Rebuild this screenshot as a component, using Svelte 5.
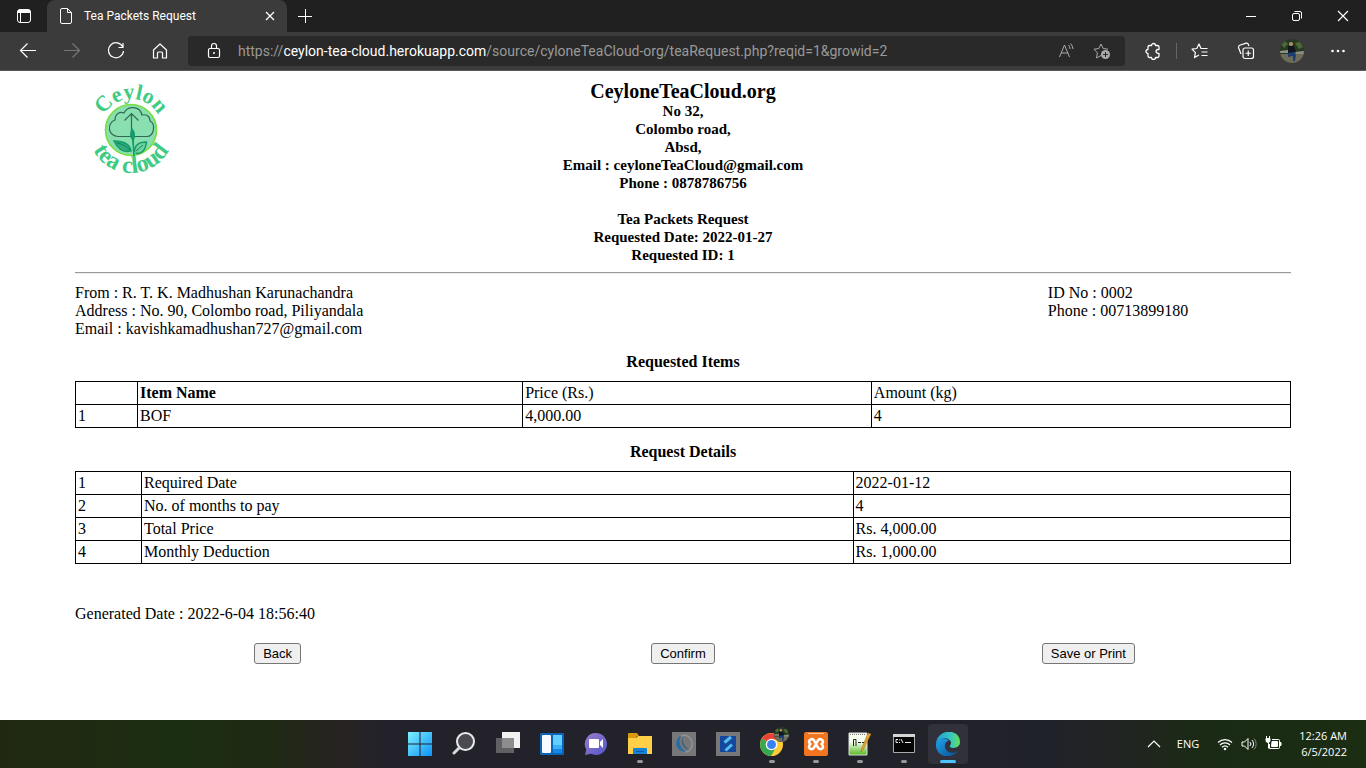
<script>
  const letterhead = ['No 32,', 'Colombo road,', 'Absd,', 'Email : ceyloneTeaCloud@gmail.com', 'Phone : 0878786756'];
  const summary = ['Tea Packets Request', 'Requested Date: 2022-01-27', 'Requested ID: 1'];
  const sender = ['From : R. T. K. Madhushan Karunachandra', 'Address : No. 90, Colombo road, Piliyandala', 'Email : kavishkamadhushan727@gmail.com'];
  const items = [['1', 'BOF', '4,000.00', '4']];
  const details = [
    ['1', 'Required Date', '2022-01-12'],
    ['2', 'No. of months to pay', '4'],
    ['3', 'Total Price', 'Rs. 4,000.00'],
    ['4', 'Monthly Deduction', 'Rs. 1,000.00']
  ];
</script>

<svelte:head><title>Tea Packets Request</title></svelte:head>

{#snippet portrait(cls)}
  <svg class={cls} viewBox="0 0 24 24" aria-hidden="true">
    <clipPath id="disc-{cls}"><circle cx="12" cy="12" r="12" /></clipPath>
    <g clip-path="url(#disc-{cls})">
      <path fill="#263a20" d="M0 0h24v24H0z" />
      <path fill="#4c6a38" d="M1 5l4-3 3 3-4 4zM15 4l5-1 3 5-4 2z" />
      <path fill="#8c8f83" d="M0 12l8-1 2 3H0zM14 13l10-1v4l-9 1z" />
      <path fill="#6e6c58" d="M0 15h24v9H0z" />
      <path fill="#11161f" d="M8 7h6l2 6-3 2H8z" />
      <circle cx="11" cy="5" r="2" fill="#b98c6e" />
      <path fill="#1d3e74" d="M8 14l7-1 1 3-1 6h-2v-5l-5 1z" />
    </g>
  </svg>
{/snippet}

<div class="screen">
  <header class="browser">
    <div class="tabs">
      <button class="tab-actions" aria-label="Tab actions">
        <svg width="16" height="16" viewBox="0 0 16 16"><rect x="1.5" y="1.5" width="13" height="13" rx="2.5" fill="none" stroke="#fff" /><path d="M1.500 5V3.500a2 2 0 0 1 2-2h9a2 2 0 0 1 2 2V5z" fill="#fff" /><path d="M4.500 5v9" stroke="#fff" /></svg>
      </button>
      <div class="tab">
        <svg width="16" height="18" viewBox="0 0 16 18" fill="none" stroke="#fff"><path d="M4 1.500h5.500l4 4V15a1.500 1.500 0 0 1-1.500 1.500H4A1.500 1.500 0 0 1 2.500 15V3A1.500 1.500 0 0 1 4 1.500zM9.500 1.500v4h4" /></svg>
        <span>Tea Packets Request</span>
        <button aria-label="Close tab"><svg width="10" height="10" viewBox="0 0 10 10" stroke="#fff" stroke-width="1.300"><path d="M1 1l8 8M9 1L1 9" /></svg></button>
      </div>
      <button class="new-tab" aria-label="New tab"><svg width="16" height="16" viewBox="0 0 16 16" stroke="#fff"><path d="M8.500 1v14M1 8.500h14" /></svg></button>
      <div class="window-buttons">
        <button aria-label="Minimize"><svg width="12" height="12" viewBox="0 0 12 12" stroke="#fff"><path d="M1 6.500h10" /></svg></button>
        <button aria-label="Restore"><svg width="12" height="12" viewBox="0 0 12 12" fill="none" stroke="#fff"><rect x="1.500" y="3.500" width="7" height="7" rx="1.500" /><path d="M3.500 1.500H9a1.500 1.500 0 0 1 1.500 1.500v5.500" /></svg></button>
        <button aria-label="Close"><svg width="12" height="12" viewBox="0 0 12 12" stroke="#fff" stroke-width="1.200"><path d="M1 1l10 10M11 1L1 11" /></svg></button>
      </div>
    </div>

    <div class="toolbar">
      <nav class="nav">
        <button aria-label="Back"><svg width="18" height="18" viewBox="0 0 18 18" fill="none" stroke="#fff" stroke-width="1.200"><path d="M17 8.500H1.500M8.500 1.500l-7 7 7 7" /></svg></button>
        <button aria-label="Forward" disabled><svg width="18" height="18" viewBox="0 0 18 18" fill="none" stroke="#777" stroke-width="1.200"><path d="M1 8.500h15.500M9.500 1.500l7 7-7 7" /></svg></button>
        <button aria-label="Refresh"><svg width="18" height="18" viewBox="0 0 18 18" fill="none" stroke="#fff" stroke-width="1.200"><path d="M15.800 5A7.500 7.500 0 1 0 16.500 9M16 1v4.500h-4.500" /></svg></button>
        <button aria-label="Home"><svg width="18" height="18" viewBox="0 0 18 18" fill="none" stroke="#fff" stroke-width="1.200"><path d="M2.500 8L9 2l6.500 6v8h-4v-5a1 1 0 0 0-1-1h-3a1 1 0 0 0-1 1v5h-4z" stroke-linejoin="round" /></svg></button>
      </nav>
      <div class="address">
        <svg width="14" height="18" viewBox="0 0 14 18" fill="none" stroke="#fff" stroke-width="1.200"><rect x="1.500" y="6.500" width="11" height="9" rx="1.500" /><path d="M4.500 6V4a2.500 2.500 0 0 1 5 0v2" /><circle cx="7" cy="11" r="1" fill="#fff" stroke="none" /></svg>
        <p class="url">https://<b>ceylon-tea-cloud.herokuapp.com</b>/source/cyloneTeaCloud-org/teaRequest.php?reqid=1&amp;growid=2</p>
        <button aria-label="Read aloud"><svg width="18" height="18" viewBox="0 0 18 18" fill="none" stroke="#aaa"><path d="M1.500 15L6.500 3l5 12M3 11h7M10.500 3a6 6 0 0 1 1.500 4M12.500 1.500A9 9 0 0 1 15 7" /></svg></button>
        <button aria-label="Add to favorites"><svg width="18" height="18" viewBox="0 0 18 18" fill="none" stroke="#aaa"><path d="M8 13.500l-4.500 2.400.9-5L1 7.200l4.800-.7L8 2l2.200 4.500 4.800.7" stroke-linejoin="round" /><circle cx="12.500" cy="12.500" r="4.500" fill="#aaa" stroke="none" /><path d="M12.500 10v5M10 12.500h5" stroke="#292929" /></svg></button>
      </div>
      <div class="tools">
        <button aria-label="Extensions"><svg width="18" height="18" viewBox="0 0 18 18" fill="none" stroke="#fff" stroke-width="1.300"><path d="M5.500 3.500h2a2 2 0 0 1 4 0h2a1.500 1.500 0 0 1 1.500 1.500v2.500h-1a1.800 1.800 0 0 0 0 3.800h1V14a1.500 1.500 0 0 1-1.500 1.500h-2a2 2 0 0 1-4 0h-2A1.500 1.500 0 0 1 4 14v-2.500a2 2 0 0 1 0-4V5a1.500 1.500 0 0 1 1.500-1.500z" stroke-linejoin="round" /></svg></button>
        <i></i>
        <button aria-label="Favorites"><svg width="18" height="18" viewBox="0 0 18 18" fill="none" stroke="#fff" stroke-width="1.200"><path d="M8 13l-4.500 2.600.9-5L1 7.200l4.800-.7L8 2l2 4.500h6.500M10.500 10h6M10.500 13.500h6" stroke-linejoin="round" /></svg></button>
        <button aria-label="Collections"><svg width="18" height="18" viewBox="0 0 18 18" fill="none" stroke="#fff" stroke-width="1.200"><rect x="6" y="6" width="10.500" height="10.500" rx="2" /><path d="M11.250 8.500v5.500M8.500 11.250H14M4 12L1.500 5.500a2 2 0 0 1 1.200-2.300L9 1.200a2 2 0 0 1 2.400 1.300l.5 1.500" /></svg></button>
        <button aria-label="Profile">{@render portrait('avatar')}</button>
        <button aria-label="More"><svg width="18" height="18" viewBox="0 0 18 18" fill="#fff"><circle cx="3.500" cy="9" r="1.300" /><circle cx="9" cy="9" r="1.300" /><circle cx="14.500" cy="9" r="1.300" /></svg></button>
      </div>
    </div>
  </header>

  <main>
    <div class="masthead">
      <svg class="logo" viewBox="0 0 110 110" role="img" aria-label="Ceylon tea cloud">
        <defs>
          <path id="arc-top" d="M25 59a31 31 0 0 1 62 0" />
          <path id="arc-bottom" d="M13 59a43 43 0 0 0 86 0" />
        </defs>
        <circle cx="56" cy="59" r="25.500" fill="#8adfb0" stroke="#74df3d" stroke-width="1.600" />
        <path d="M43 65.500a8.500 8.500 0 0 1-3-16.500c0-6 5-9 9-7 4-8 16-7 18 2 4-1 8 1 8 6 6 3 4 15.500-3 15.500z" fill="none" stroke="#2f6b52" stroke-width="1.200" />
        <path d="M56.500 60V43M49.500 49.500l7-7 7 7" fill="none" stroke="#2f6b52" stroke-width="1.200" />
        <path d="M57 57c-3 5-2 9 0 12 1 9 1 19 3 31h2c-2-11-3-22-3-31 2-5 1-9-2-12z" fill="#159a69" />
        <path d="M56 80c-1-7-7-10-17-10 3 6 7 12 17 10z" fill="#2fae7c" stroke="#159a69" stroke-width="1.500" />
        <path d="M59.500 81c0-8 5-10 12-10-1 8-5 13-11 11" fill="#6fd3a0" stroke="#159a69" stroke-width="1.500" />
        <path d="M42 72c6 1 10 4 13 7M61 80l7-6" fill="none" stroke="#0e8058" />
        <g class="logo-text">
          <text><textPath href="#arc-top" startOffset="50%" text-anchor="middle">Ceylon</textPath></text>
          <text class="lower"><textPath href="#arc-bottom" startOffset="50%" text-anchor="middle">tea cloud</textPath></text>
        </g>
      </svg>
      <div class="letterhead">
        <h1>CeyloneTeaCloud.org</h1>
        {#each letterhead as line}<p>{line}</p>{/each}
        <div class="summary">
          {#each summary as line}<p>{line}</p>{/each}
        </div>
      </div>
    </div>
    <hr />
    <section class="parties">
      <div>{#each sender as line}<p>{line}</p>{/each}</div>
      <div><p>ID No : 0002</p><p>Phone : 00713899180</p></div>
    </section>

    <h2>Requested Items</h2>
    <table class="items">
      <colgroup><col /><col /><col /><col /></colgroup>
      <thead><tr><td></td><th>Item Name</th><td>Price (Rs.)</td><td>Amount (kg)</td></tr></thead>
      <tbody>
        {#each items as row}<tr>{#each row as cell}<td>{cell}</td>{/each}</tr>{/each}
      </tbody>
    </table>

    <h2>Request Details</h2>
    <table class="details">
      <colgroup><col /><col /><col /></colgroup>
      <tbody>
        {#each details as row}<tr>{#each row as cell}<td>{cell}</td>{/each}</tr>{/each}
      </tbody>
    </table>

    <p class="generated">Generated Date : 2022-6-04 18:56:40</p>
    <div class="actions">
      <button>Back</button>
      <button>Confirm</button>
      <button>Save or Print</button>
    </div>
  </main>

  <footer class="taskbar">
    <div class="apps">
      <button aria-label="Start"><svg viewBox="0 0 24 24"><defs><linearGradient id="start" x1="0" y1="0" x2="1" y2="1"><stop stop-color="#7df0ff" /><stop offset="1" stop-color="#0d93f5" /></linearGradient></defs><path d="M0 0h11.500v11.500H0zM12.500 0H24v11.500H12.500zM0 12.500h11.500V24H0zM12.500 12.500H24V24H12.500z" fill="url(#start)" /></svg></button>
      <button aria-label="Search"><svg viewBox="0 0 24 24"><circle cx="13.500" cy="9.500" r="8.500" fill="#4a4a50" stroke="#e8ebee" stroke-width="2" /><path d="M7 16l-5 5" stroke="#d7dadd" stroke-width="3" stroke-linecap="round" /></svg></button>
      <button aria-label="Task view"><svg viewBox="0 0 24 24"><path d="M6 0h18v16H6z" fill="#f2f2f2" /><path d="M0 6h18v15H0z" fill="#616163" /><path d="M6 6h12v10H6z" fill="#8d8d8d" /></svg></button>
      <button aria-label="Widgets"><svg viewBox="0 0 24 24"><rect y="1" width="24" height="22" rx="1" fill="#0a65b8" /><rect x="2" y="3" width="9" height="18" rx="1" fill="#f7faff" /><path d="M13 3h9v10h-9z" fill="#63cfff" /><path d="M13 13h9v8h-9z" fill="#1489e3" /><path d="M13 13h9v4h-9z" fill="#38b0f5" /></svg></button>
      <button aria-label="Chat"><svg viewBox="0 0 24 24"><defs><linearGradient id="chat" x1="0" y1="0" x2="1" y2="1"><stop stop-color="#9b7cc8" /><stop offset="1" stop-color="#5356cc" /></linearGradient></defs><path d="M12 1a11 11 0 1 1-5 20.800L1 23l1.300-5.500A11 11 0 0 1 12 1z" fill="url(#chat)" /><rect x="5" y="7" width="10" height="9" rx="1" fill="#fff" /><path d="M16 10l3-3v9l-3-3z" fill="#fff" /></svg></button>
      <button class="open" aria-label="File Explorer"><svg viewBox="0 0 24 24"><path d="M0 2a1 1 0 0 1 1-1h8l2 3h-2L8 6H0z" fill="#d99a10" /><path d="M0 6h8l2-2h14v18H0z" fill="#ffcf48" /><path d="M5 22v-5a1 1 0 0 1 1-1h12a1 1 0 0 1 1 1v5z" fill="#1683d8" /><path d="M8 19h8v1H8z" fill="#0b59a0" /></svg></button>
      <button aria-label="Swirl application"><svg viewBox="0 0 24 24"><path d="M0 0h24v24H0z" fill="#777" /><path d="M9 4C14 2 20 5 20 12c0 5-3 8-7 8" fill="none" stroke="#8b949b" stroke-width="1.500" /><path d="M9 3.500C2 7 2 19 14 20 8 16 6 10 9 3.500z" fill="#256da6" /><path d="M11 4c-3 6-1 13 6 14-4-4-7-8-6-14z" fill="#48647a" /></svg></button>
      <button aria-label="Stripe application"><svg viewBox="0 0 24 24"><path d="M0 0h24v24H0z" fill="#777" /><path d="M4 4h16v16H4z" fill="#16479e" /><path d="M8.500 10.500L15 5M9.500 18.500L16 12.500" stroke="#55bdea" stroke-width="3" /></svg></button>
      <button class="open" aria-label="Google Chrome"><svg viewBox="0 0 24 24"><circle cx="11.500" cy="12.500" r="11.500" fill="#fc3" /><path d="M11.500 12.500L1.800 6.500A11.500 11.500 0 0 1 21.700 7.500H12z" fill="#ea4335" /><path d="M11.500 12.500L1.800 6.500A11.500 11.500 0 0 0 11 24l5-8.500z" fill="#34a853" /><circle cx="11.500" cy="12.500" r="5.800" fill="#fff" /><circle cx="11.500" cy="12.500" r="4.500" fill="#3b80ef" /></svg>{@render portrait('badge')}</button>
      <button class="open" aria-label="XAMPP"><svg viewBox="0 0 24 24"><rect width="24" height="24" rx="2" fill="#f27522" /><path d="M4 1h16v1H4z" fill="#ffc9a0" /><path d="M12 12L10 8.300A2.800 2.800 0 0 0 5 9.500q0 1.500 1.500 2.500Q5 13 5 15.500a2.800 2.800 0 0 0 5 .2zM12 12l2-3.700a2.800 2.800 0 0 1 5 1.200q0 1.500-1.500 2.500 1.500 1 1.500 3.500a2.800 2.800 0 0 1-5 .2z" fill="none" stroke="#fff" stroke-width="2.600" stroke-linejoin="round" /></svg></button>
      <button class="open" aria-label="Notepad++"><svg viewBox="0 0 24 24"><defs><linearGradient id="note" x1="0" y1="0" x2="0" y2="1"><stop offset=".4" stop-color="#f7fff0" /><stop offset="1" stop-color="#54b91e" /></linearGradient></defs><path d="M1 1h18v22H1z" fill="url(#note)" stroke="#ddd" /><path d="M2 2.500h16" stroke="#777" stroke-dasharray="1 1" /><path d="M5.500 14V7.500H8V14M10 10.500h3M14 10.500h3" fill="none" stroke="#222" /><path d="M13 18L20 1l3 1-8 16-2 2z" fill="#e5a331" stroke="#9b6a1b" stroke-width=".5" /></svg></button>
      <button class="open" aria-label="Command Prompt"><svg viewBox="0 0 24 24"><path d="M1.500 2.500h21v18h-21z" fill="#050505" stroke="#aaa" /><path d="M1 2h22v3H1z" fill="#d5d5d5" /><path d="M6 7.500H4v3h2M7.500 7.500v1M7.500 10v1M9 7l2 4M13 10.500h6" fill="none" stroke="#eee" /></svg></button>
      <button class="open active" aria-label="Microsoft Edge"><svg viewBox="0 0 24 24"><defs><linearGradient id="edge-top" x1="0" y1="0" x2="1" y2="0"><stop stop-color="#249bd7" /><stop offset=".6" stop-color="#35c8c2" /><stop offset="1" stop-color="#65df58" /></linearGradient><linearGradient id="edge-low" x1="0" y1="0" x2="1" y2="1"><stop stop-color="#1fa6ed" /><stop offset="1" stop-color="#0c4c94" /></linearGradient></defs><path d="M0 12C1-4 24-4 24 10c0 6-7 7-10 5-1-1 1-2 1-4 0-5-10-8-15 1z" fill="url(#edge-top)" /><path d="M0 12c1-6 10-8 13-3-5 0-6 9 0 11 4 2 7 0 9-1-8 10-23 5-22-7z" fill="url(#edge-low)" /></svg></button>
    </div>
    <div class="tray">
      <svg width="14" height="14" viewBox="0 0 14 14" fill="none" stroke="#fff" stroke-width="1.200"><path d="M1 10l6-6 6 6" /></svg>
      <span class="lang">ENG</span>
      <div class="status">
        <svg width="16" height="16" viewBox="0 0 16 16" fill="none" stroke="#fff" stroke-width="1.200"><path d="M1 6.500a10 10 0 0 1 14 0M3 9a7 7 0 0 1 10 0M5 11.300a4.500 4.500 0 0 1 6 0" /><circle cx="8" cy="13" r="1.300" fill="#fff" stroke="none" /></svg>
        <svg width="16" height="16" viewBox="0 0 16 16" fill="none" stroke="#fff"><path d="M1 6h2.500L7 2.500v11L3.500 10H1zM9 6a3 3 0 0 1 0 4M11 4a6 6 0 0 1 0 8" /><path d="M13 2.500a8 8 0 0 1 0 11" stroke="#7c8974" /></svg>
        <svg width="18" height="16" viewBox="0 0 18 16" fill="none" stroke="#fff"><path d="M7 3.500h6.500a1 1 0 0 1 1 1v7a1 1 0 0 1-1 1h-9V8" /><path d="M7 5.500h5.500v5h-6zM15 6.500h1v3h-1zM1 2.500h4v2a2 2 0 0 1-4 0z" fill="#fff" /><path d="M1.500 2.500V0M4.500 2.500V0M3.500 7v5.500" /></svg>
      </div>
      <div class="clock"><time>12:26 AM</time><time>6/5/2022</time></div>
    </div>
  </footer>
</div>

<style>
  :global(body) { margin: 0; background: #fff; }
  .screen { display: flex; flex-direction: column; min-height: 100vh; font-family: "Liberation Serif", "Times New Roman", serif; font-size: 16px; line-height: 18px; color: #000; }
  p, h1, h2 { margin: 0; }
  button { font: inherit; }
  .browser, .taskbar { color: #fff; }
  .browser { font-family: Roboto, "Open Sans", sans-serif; }
  .taskbar { font-family: "Open Sans", "Noto Sans", sans-serif; }
  .browser button, .taskbar button { display: flex; align-items: center; justify-content: center; padding: 0; border: 0; background: none; }
  svg { display: block; flex: none; }

  .browser { border-bottom: 1px solid #5d595a; background: #3b3b3b; }
  .tabs { display: flex; height: 32px; background: #202020; }
  .tab-actions { width: 47px; }
  .tab { display: flex; flex: 0 1 240px; align-items: center; box-sizing: border-box; padding: 0 12px 0 11px; border-radius: 8px 8px 0 0; background: #3b3b3b; font-size: 12px; }
  .tab span { flex: 1; padding-left: 10px; white-space: nowrap; }
  .new-tab { width: 36px; }
  .window-buttons { display: flex; margin-left: auto; }
  .window-buttons button { width: 46px; }
  .toolbar { display: flex; align-items: center; height: 38px; }
  .nav { display: flex; padding: 0 6px; }
  .nav button { width: 44px; }
  .address { display: flex; flex: 1; align-items: center; gap: 17px; min-width: 0; height: 30px; padding: 0 14px 0 19px; border-radius: 4px; background: #292929; }
  .url { flex: 1; overflow: hidden; color: #999; font-size: 14px; white-space: nowrap; }
  .url b { color: #fff; font-weight: 400; }
  .tools { display: flex; align-items: center; padding: 0 5px; }
  .tools button { width: 46px; }
  .tools i { width: 1px; height: 16px; background: #666; }
  .tools :global(.avatar) { width: 24px; height: 24px; }

  main { flex: 1; padding: 9px 75px; }
  .masthead { display: grid; grid-template-columns: 1fr auto 1fr; }
  .logo { width: 110px; height: 110px; margin-top: -9px; overflow: visible; }
  .logo-text { fill: #3fcb84; font-family: "Liberation Serif", serif; font-size: 22px; font-weight: 700; }
  .lower { font-size: 24px; }
  .letterhead { font-size: 15px; font-weight: 700; text-align: center; }
  h1 { font-size: 20px; line-height: 22px; }
  .summary { padding-top: 18px; }
  hr { margin: 8px 0; border: 0; border-top: 1px solid #999; border-bottom: 1px solid #eee; }
  .parties { display: grid; grid-template-columns: 4fr 1fr; padding-top: 2px; }
  h2 { margin: 15px 0 10px; font-size: 16px; line-height: 18px; text-align: center; }
  table { width: 100%; border-collapse: collapse; table-layout: fixed; }
  th, td { height: 18px; padding: 2px; border: 1px solid #000; text-align: left; }
  .items col:nth-child(1) { width: 62px; }
  .items col:nth-child(2) { width: 31.7%; }
  .items col:nth-child(3) { width: 28.7%; }
  .details col:nth-child(1) { width: 66px; }
  .details col:nth-child(3) { width: 36%; }
  .generated { padding: 41px 0 20px; }
  .actions { display: grid; grid-template-columns: 1fr 1fr 1fr; justify-items: center; }
  .actions button { padding: 2px 8px; border: 1px solid #767676; border-radius: 3px; background: #efefef; color: #000; font: 13px/15px "Liberation Sans", Arial, sans-serif; }

  .taskbar { display: grid; grid-template-columns: 1fr auto 1fr; height: 48px; background: linear-gradient(90deg, #202811, #1c2e12 13%, #1e2914 20%, #282322 25%, #23222a 28%, #22222a 70%, #1f212b 76%, #212421 82%, #1a2a15 88%, #1b2d12); }
  .apps { display: flex; grid-column: 2; align-items: center; gap: 4px; padding-left: 2px; }
  .apps button { position: relative; width: 40px; height: 40px; border-radius: 4px; }
  .apps button > svg { width: 24px; height: 24px; }
  .apps :global(button > svg.badge) { position: absolute; top: 3px; right: 3px; width: 15px; height: 15px; }
  .apps .active { background: #30313a; }
  .open::after { position: absolute; bottom: 1px; left: 17px; width: 6px; height: 3px; border-radius: 2px; background: #999; content: ""; }
  .apps .active::after { left: 12px; width: 16px; background: #4cc2ff; }
  .tray { display: flex; align-items: center; justify-content: flex-end; padding-right: 19px; font-size: 11px; }
  .lang { padding: 0 18px 0 16px; }
  .status { display: flex; gap: 8px; padding-right: 16px; }
  .clock { display: grid; line-height: 16px; text-align: right; }
</style>
